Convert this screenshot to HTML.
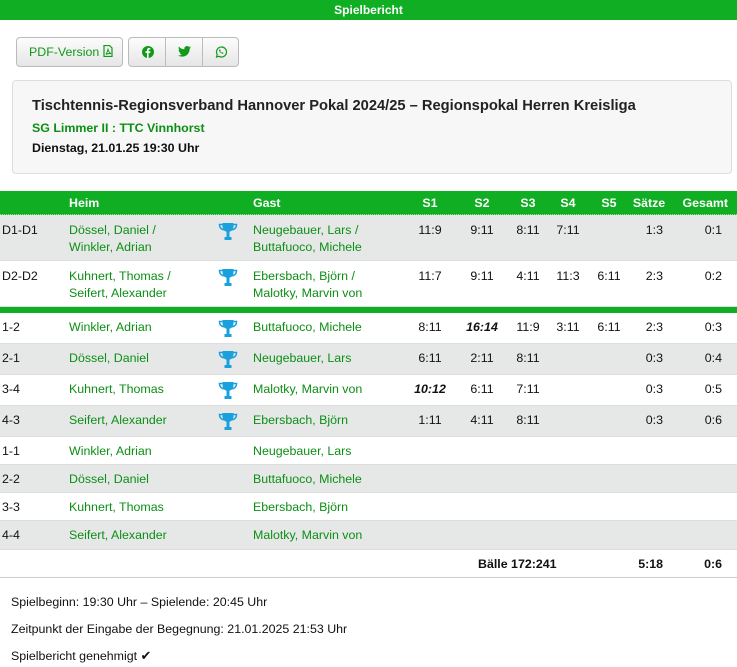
<!DOCTYPE html>
<html><head><meta charset="utf-8"><style>
*{margin:0;padding:0;box-sizing:border-box}
body{width:737px;height:667px;background:#fff;font-family:"Liberation Sans",Arial,sans-serif;font-size:12.4px;color:#111;position:relative;overflow:hidden}
.top{position:absolute;left:0;top:0;width:737px;height:20px;background:#10ae22;color:#fff;font-weight:bold;text-align:center;line-height:20px;font-size:12px}
.btn{position:absolute;top:37px;height:30px;border:1px solid #bbb;border-radius:4px;background:linear-gradient(#fcfcfc,#e6e6e6);color:#109a18;line-height:28px;font-size:12.4px}
.box{position:absolute;left:12px;top:80px;width:720px;height:94px;border:1px solid #ddd;border-radius:4px;background:#f7f7f7}
.row{position:absolute;left:0;width:737px}
.a{position:absolute}
.g{color:#0c8f14}
.gr{background:#e6e8e8}
.hd{background:#10ae22;color:#fff;font-weight:bold;top:191px;height:24px;border-bottom:1px dotted #9ee09e}
.c{position:absolute;text-align:center;width:50px}
.r{position:absolute;text-align:right}
</style></head><body>
<div class="top">Spielbericht</div>
<div class="btn" style="left:16px;width:107px;padding-left:12px">PDF-Version <svg width="10" height="12" viewBox="0 0 10 12" style="vertical-align:-1px"><path d="M1 .5h5.5l2.5 2.5v8.5H1z" fill="none" stroke="#109a18" stroke-width="1.2"/><path d="M3 9.5c1-2 2-4 2-6 0 2 1 4 3 5-2 0-4 0-5 1z" fill="none" stroke="#109a18" stroke-width=".9"/></svg></div>
<div class="btn" style="left:128px;width:111px">
<span style="position:absolute;left:0;width:37px;top:0;height:28px;border-right:1px solid #bbb"></span>
<span style="position:absolute;left:37px;width:37px;top:0;height:28px;border-right:1px solid #bbb"></span>
<svg style="position:absolute;left:13px;top:8px" width="12" height="12" viewBox="0 0 12 12"><circle cx="6" cy="6" r="6" fill="#109a18"/><path d="M6.6 12V7h1.6l.2-1.7H6.6v-1c0-.5.2-.8.8-.8h.9V2a8 8 0 0 0-1.3-.1C5.800 1.900 5 2.700 5 4.100v1.200H3.500V7H5v5z" fill="#fff"/></svg>
<svg style="position:absolute;left:49px;top:8px" width="13" height="11" viewBox="0 0 24 20"><path d="M24 2.400a10 10 0 0 1-2.800.8A5 5 0 0 0 23.300.4a10 10 0 0 1-3.100 1.200A4.900 4.900 0 0 0 11.800 6 14 14 0 0 1 1.700.9a4.900 4.900 0 0 0 1.500 6.600A4.900 4.900 0 0 1 1 6.900a4.900 4.900 0 0 0 3.900 4.800 5 5 0 0 1-2.200.1 4.900 4.900 0 0 0 4.600 3.400A9.900 9.900 0 0 1 0 17.300 14 14 0 0 0 7.500 19.500c9.100 0 14-7.500 14-14v-.6A10 10 0 0 0 24 2.400z" fill="#109a18"/></svg>
<svg style="position:absolute;left:86px;top:8px" width="12" height="12" viewBox="0 0 12 12"><path d="M1.500 11l.7-2.500A5 5 0 1 1 4 10.300z" fill="none" stroke="#109a18" stroke-width="1.2"/><path d="M4 3.800c0 2 2 4 4 4l.6-.9-1.200-.6-.5.5c-.8-.3-1.400-.9-1.700-1.700l.5-.5-.6-1.200z" fill="#109a18"/></svg>
</div>
<div class="box">
<div class="a" style="left:19px;top:17px;font-size:14.7px;font-weight:bold;color:#222">Tischtennis-Regionsverband Hannover Pokal 2024/25 – Regionspokal Herren Kreisliga</div>
<div class="a g" style="left:19px;top:40px;font-weight:bold">SG Limmer II : TTC Vinnhorst</div>
<div class="a" style="left:19px;top:60px;font-weight:bold">Dienstag, 21.01.25 19:30 Uhr</div>
</div>

<div class="row hd">
<span class="a" style="left:69px;top:5px">Heim</span><span class="a" style="left:253px;top:5px">Gast</span>
<span class="c" style="left:405px;top:5px">S1</span><span class="c" style="left:457px;top:5px">S2</span><span class="c" style="left:503px;top:5px">S3</span><span class="c" style="left:543px;top:5px">S4</span><span class="c" style="left:584px;top:5px">S5</span><span class="c" style="left:624px;top:5px">Sätze</span><span class="r" style="left:670px;width:58px;top:5px">Gesamt</span>
</div>
<div id="rows"></div>
<div class="row" style="top:307px;height:6px;background:#10ae22"></div>
<div class="row" style="top:577px;height:1px;background:#ccc"></div>
<div class="a" style="left:478px;top:557px;font-weight:bold">Bälle 172:241</div>
<div class="r" style="left:600px;width:63px;top:557px;font-weight:bold">5:18</div>
<div class="r" style="left:680px;width:42px;top:557px;font-weight:bold">0:6</div>
<div class="a" style="left:11px;top:595px">Spielbeginn: 19:30 Uhr – Spielende: 20:45 Uhr</div>
<div class="a" style="left:11px;top:622px">Zeitpunkt der Eingabe der Begegnung: 21.01.2025 21:53 Uhr</div>
<div class="a" style="left:11px;top:648px">Spielbericht genehmigt <span style="font-size:13px">✔</span></div>
<script>
var T='<svg width="20" height="22" viewBox="0 0 20 22"><path d="M4.500 2h11v3.500a5.500 5.500 0 0 1-4 5.300V16h2v3h-7v-3h2v-5.200a5.500 5.500 0 0 1-4-5.300z" fill="#1aa0dc"/><path d="M5 3.500H1.500c0 3 1.800 5 4.300 5.300M15 3.500h3.500c0 3-1.800 5-4.300 5.300" fill="none" stroke="#1aa0dc" stroke-width="1.600"/></svg>';
var R=[
[215,46,1,"D1-D1","Dössel, Daniel /<br>Winkler, Adrian","Neugebauer, Lars /<br>Buttafuoco, Michele",["11:9","9:11","8:11","7:11",""],"1:3","0:1",1,-1],
[261,46,0,"D2-D2","Kuhnert, Thomas /<br>Seifert, Alexander","Ebersbach, Björn /<br>Malotky, Marvin von",["11:7","9:11","4:11","11:3","6:11"],"2:3","0:2",1,-1],
[313,31,0,"1-2","Winkler, Adrian","Buttafuoco, Michele",["8:11","16:14","11:9","3:11","6:11"],"2:3","0:3",1,1],
[344,31,1,"2-1","Dössel, Daniel","Neugebauer, Lars",["6:11","2:11","8:11","",""],"0:3","0:4",1,-1],
[375,31,0,"3-4","Kuhnert, Thomas","Malotky, Marvin von",["10:12","6:11","7:11","",""],"0:3","0:5",1,0],
[406,31,1,"4-3","Seifert, Alexander","Ebersbach, Björn",["1:11","4:11","8:11","",""],"0:3","0:6",1,-1],
[437,28,0,"1-1","Winkler, Adrian","Neugebauer, Lars",["","","","",""],"","",0,-1],
[465,28,1,"2-2","Dössel, Daniel","Buttafuoco, Michele",["","","","",""],"","",0,-1],
[493,28,0,"3-3","Kuhnert, Thomas","Ebersbach, Björn",["","","","",""],"","",0,-1],
[521,29,1,"4-4","Seifert, Alexander","Malotky, Marvin von",["","","","",""],"","",0,-1]];
var cx=[430,482,528,568,609],h='';
R.forEach(function(r){
var two=r[1]>40, t=two?8:7, nt=two?7:t;
h+='<div class="row'+(r[2]?' gr':'')+'" style="top:'+r[0]+'px;height:'+r[1]+'px;border-bottom:1px solid #ddd">';
h+='<span class="a" style="left:2px;top:'+t+'px">'+r[3]+'</span>';
h+='<span class="a g" style="left:69px;top:'+nt+'px;line-height:'+(two?17:14)+'px">'+r[4]+'</span>';
if(r[9])h+='<span class="a" style="left:218px;top:'+(t-2)+'px">'+T+'</span>';
h+='<span class="a g" style="left:253px;top:'+nt+'px;line-height:'+(two?17:14)+'px">'+r[5]+'</span>';
r[6].forEach(function(s,i){h+='<span class="c" style="left:'+(cx[i]-25)+'px;top:'+t+'px;'+(i==r[10]?'font-weight:bold;font-style:italic':'')+'">'+s+'</span>';});
h+='<span class="r" style="left:600px;width:63px;top:'+t+'px">'+r[7]+'</span>';
h+='<span class="r" style="left:680px;width:42px;top:'+t+'px">'+r[8]+'</span></div>';
});
document.getElementById('rows').innerHTML=h;
</script>
</body></html>
